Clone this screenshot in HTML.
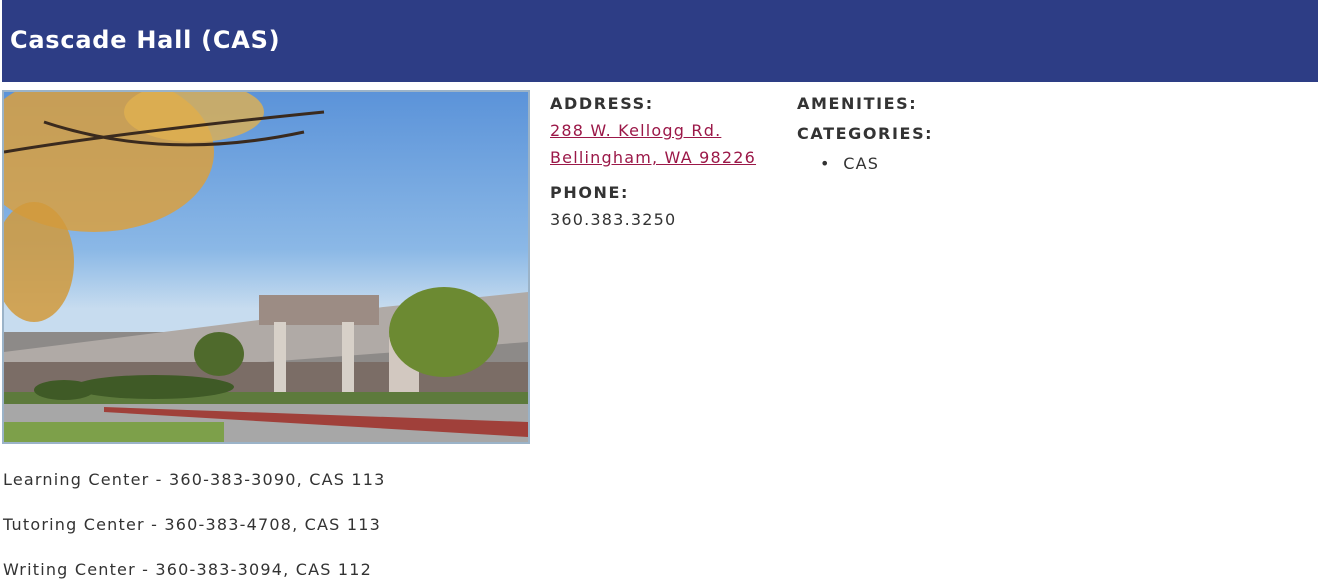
<!DOCTYPE html>
<html><head><style>
body{margin:0;background:#fff;font-family:"DejaVu Sans",Verdana,sans-serif;color:#333;font-size:16px;width:1318px;height:583px;overflow:hidden;position:relative;letter-spacing:1.2px}
.hdr{position:absolute;left:2px;top:0;width:1316px;height:82px;background:#2d3d85}
.hdr h1{margin:0;position:absolute;left:8px;top:26px;color:#fff;font-size:24px;font-weight:bold;letter-spacing:0.75px}
.img{position:absolute;left:2px;top:90px;width:524px;height:350px;border:2px solid #9bb3c8;overflow:hidden;background:linear-gradient(180deg,#5b93d9 0%,#8bb8e6 45%,#c7dcef 62%)}
.a{position:absolute;font-size:16px;line-height:20px}
b{font-weight:bold;color:#333;letter-spacing:1.6px}
a{color:#9b1848;text-decoration:underline}
</style></head><body>
<div class="hdr"><h1>Cascade Hall (CAS)</h1></div>
<div class="img">
<svg width="524" height="350" viewBox="0 0 524 350">
<rect x="0" y="240" width="524" height="70" fill="#8d8a88"/>
<polygon points="0,260 255,228 524,200 524,250 0,290" fill="#b0aaa6"/>
<rect x="0" y="270" width="524" height="40" fill="#7b6d66"/>
<rect x="255" y="203" width="120" height="30" fill="#9c8c84"/>
<rect x="270" y="230" width="12" height="90" fill="#d7d0c8"/>
<rect x="338" y="230" width="12" height="90" fill="#d7d0c8"/>
<rect x="385" y="245" width="30" height="70" fill="#d2c8c0"/>
<rect x="0" y="300" width="524" height="22" fill="#5d7a3c"/>
<rect x="0" y="312" width="524" height="38" fill="#a7a7a7"/>
<rect x="0" y="330" width="220" height="20" fill="#7da04a"/>
<polygon points="100,315 524,330 524,345 100,320" fill="#a0403a"/>
<ellipse cx="440" cy="240" rx="55" ry="45" fill="#6c8a32"/>
<ellipse cx="215" cy="262" rx="25" ry="22" fill="#4f6a2c"/>
<ellipse cx="150" cy="295" rx="80" ry="12" fill="#3f5a26"/>
<ellipse cx="60" cy="298" rx="30" ry="10" fill="#3f5a26"/>
<ellipse cx="90" cy="60" rx="120" ry="80" fill="#d9a040" opacity="0.85"/>
<ellipse cx="30" cy="170" rx="40" ry="60" fill="#d19a3c" opacity="0.85"/>
<ellipse cx="190" cy="20" rx="70" ry="30" fill="#e0b050" opacity="0.8"/>
<path d="M0 60 Q120 40 320 20 M40 30 Q160 70 300 40" stroke="#3a2a1e" stroke-width="3" fill="none"/>
</svg>
</div>
<div class="a" style="left:550px;top:94px"><b>ADDRESS:</b></div>
<div class="a" style="left:550px;top:121px"><a>288 W. Kellogg Rd.</a></div>
<div class="a" style="left:550px;top:148px"><a>Bellingham, WA 98226</a></div>
<div class="a" style="left:550px;top:183px"><b>PHONE:</b></div>
<div class="a" style="left:550px;top:210px">360.383.3250</div>
<div class="a" style="left:797px;top:94px"><b>AMENITIES:</b></div>
<div class="a" style="left:797px;top:124px"><b>CATEGORIES:</b></div>
<div class="a" style="left:820px;top:154px">•&nbsp;&nbsp;CAS</div>
<div class="a" style="left:3px;top:470px">Learning Center - 360-383-3090, CAS 113</div>
<div class="a" style="left:3px;top:515px">Tutoring Center - 360-383-4708, CAS 113</div>
<div class="a" style="left:3px;top:560px">Writing Center - 360-383-3094, CAS 112</div>
</body></html>
